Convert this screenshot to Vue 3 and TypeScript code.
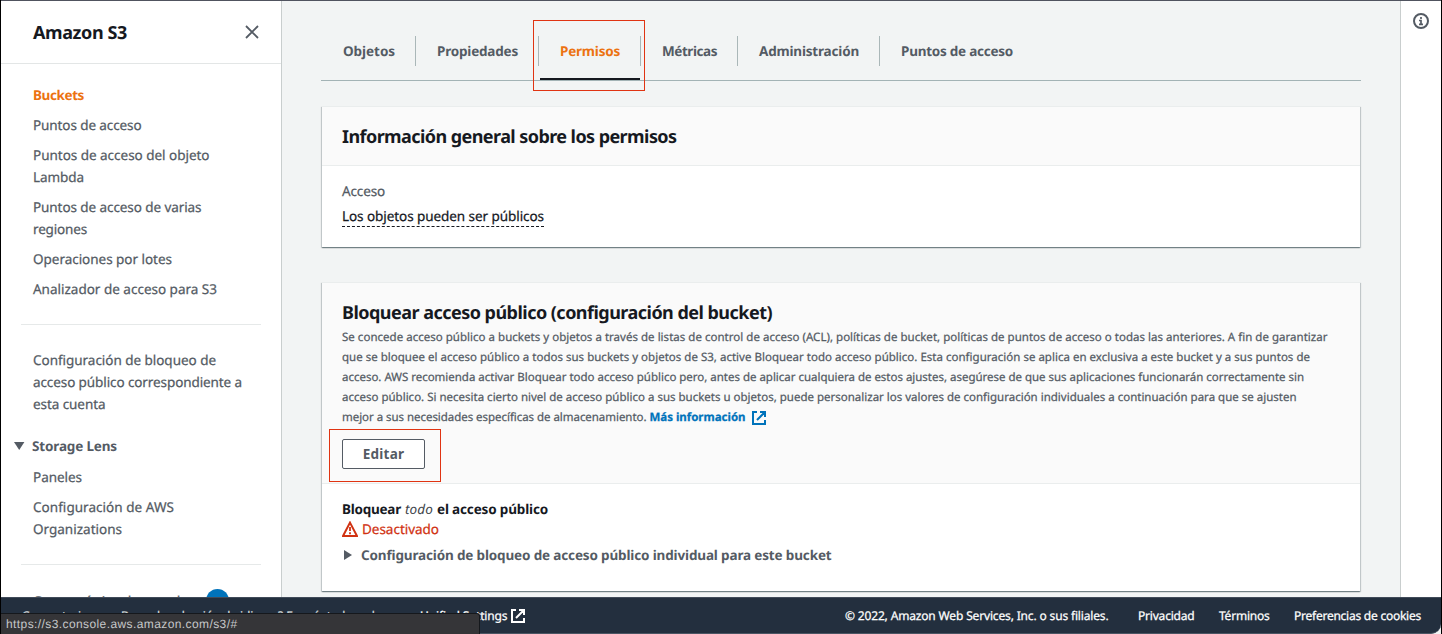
<script setup lang="ts">
import type { Directive } from 'vue'

interface Line { text: string; width: number }
interface NavItem { lines: Line[]; active?: boolean }

/* Tracks a single-line label out (or in) so it fills the given width in px. */
const vTrack: Directive<HTMLElement, number> = {
  mounted(el, binding) {
    const count = (el.textContent ?? '').length
    const natural = el.getBoundingClientRect().width
    el.style.letterSpacing = `${(binding.value - natural) / count}px`
  },
}

const mainNav: NavItem[] = [
  { lines: [{ text: 'Buckets', width: 51 }], active: true },
  { lines: [{ text: 'Puntos de acceso', width: 108.5 }] },
  { lines: [{ text: 'Puntos de acceso del objeto', width: 176.5 }, { text: 'Lambda', width: 51 }] },
  { lines: [{ text: 'Puntos de acceso de varias', width: 168.5 }, { text: 'regiones', width: 54 }] },
  { lines: [{ text: 'Operaciones por lotes', width: 139 }] },
  { lines: [{ text: 'Analizador de acceso para S3', width: 184 }] },
]

const accountNav: NavItem[] = [
  {
    lines: [
      { text: 'Configuración de bloqueo de', width: 183 },
      { text: 'acceso público correspondiente a', width: 209 },
      { text: 'esta cuenta', width: 72.5 },
    ],
  },
]

const lensNav: NavItem[] = [
  { lines: [{ text: 'Paneles', width: 49 }] },
  { lines: [{ text: 'Configuración de AWS', width: 141 }, { text: 'Organizations', width: 89 }] },
]

const tabs = [
  { text: 'Objetos', width: 52 },
  { text: 'Propiedades', width: 81 },
  { text: 'Permisos', width: 60, active: true },
  { text: 'Métricas', width: 55 },
  { text: 'Administración', width: 100 },
  { text: 'Puntos de acceso', width: 112 },
]

const description: Line[] = [
  { text: 'Se concede acceso público a buckets y objetos a través de listas de control de acceso (ACL), políticas de bucket, políticas de puntos de acceso o todas las anteriores. A fin de garantizar', width: 985.5 },
  { text: 'que se bloquee el acceso público a todos sus buckets y objetos de S3, active Bloquear todo acceso público. Esta configuración se aplica en exclusiva a este bucket y a sus puntos de', width: 968 },
  { text: 'acceso. AWS recomienda activar Bloquear todo acceso público pero, antes de aplicar cualquiera de estos ajustes, asegúrese de que sus aplicaciones funcionarán correctamente sin', width: 962 },
  { text: 'acceso público. Si necesita cierto nivel de acceso público a sus buckets u objetos, puede personalizar los valores de configuración individuales a continuación para que se ajusten', width: 954.5 },
]
</script>

<template>
  <div class="window">
    <div class="workspace">
      <aside class="sidebar">
        <header class="side-head">
          <h2><span v-track="94" class="t">Amazon S3</span></h2>
          <svg class="close" width="14" height="14" viewBox="0 0 14 14"><path d="M1 1 13 13M13 1 1 13" /></svg>
        </header>
        <nav class="side-body">
          <ul>
            <li v-for="(item, i) in mainNav" :key="i" :class="{ active: item.active }">
              <div v-for="line in item.lines" :key="line.text"><span v-track="line.width" class="t">{{ line.text }}</span></div>
            </li>
          </ul>
          <hr />
          <ul class="account">
            <li v-for="(item, i) in accountNav" :key="i">
              <div v-for="line in item.lines" :key="line.text"><span v-track="line.width" class="t">{{ line.text }}</span></div>
            </li>
          </ul>
          <div class="lens">
            <svg width="11" height="8" viewBox="0 0 11 8"><path d="M0 0h10.4L5.2 8z" /></svg>
            <b v-track="85" class="t">Storage Lens</b>
          </div>
          <ul>
            <li v-for="(item, i) in lensNav" :key="i">
              <div v-for="line in item.lines" :key="line.text"><span v-track="line.width" class="t">{{ line.text }}</span></div>
            </li>
          </ul>
          <hr />
          <div class="feature">
            <span v-track="155" class="t">Característica destacada</span>
            <span class="count"></span>
          </div>
        </nav>
      </aside>

      <main class="content">
        <div class="tabs">
          <div v-for="tab in tabs" :key="tab.text" class="tab" :class="{ current: tab.active }">
            <span v-track="tab.width" class="t">{{ tab.text }}</span>
          </div>
        </div>

        <section class="card overview">
          <div class="card-head"><h3><span v-track="334.5" class="t">Información general sobre los permisos</span></h3></div>
          <div class="card-body">
            <div class="label"><span v-track="43" class="t">Acceso</span></div>
            <div class="value"><span v-track="202" class="t">Los objetos pueden ser públicos</span></div>
          </div>
        </section>

        <section class="card block">
          <div class="card-head">
            <h3><span v-track="430" class="t">Bloquear acceso público (configuración del bucket)</span></h3>
            <div class="description">
              <div v-for="line in description" :key="line.text"><span v-track="line.width" class="t">{{ line.text }}</span></div>
              <div class="last">
                <span v-track="304.5" class="t">mejor a sus necesidades específicas de almacenamiento.</span>
                <a><span v-track="96" class="t">Más información</span>
                  <svg width="14" height="14" viewBox="0 0 14 14"><path d="M5 1H1v12h12V9M8 1h5v5M13 1 5 9" /></svg>
                </a>
              </div>
            </div>
            <button type="button"><span v-track="41.5" class="t">Editar</span></button>
          </div>
          <div class="card-body">
            <div class="setting">
              <b v-track="59" class="t">Bloquear</b><em v-track="28" class="t">todo</em><b v-track="111" class="t">el acceso público</b>
            </div>
            <div class="status">
              <svg width="16" height="16" viewBox="0 0 16 16"><path d="M8 1.6 15 15H1z" /><path class="mark" d="M8 6v4M8 11.3v2" /></svg>
              <span v-track="77" class="t">Desactivado</span>
            </div>
            <div class="expander">
              <svg width="8" height="10" viewBox="0 0 8 10"><path d="M0 0v10l8-5z" /></svg>
              <b v-track="470.5" class="t">Configuración de bloqueo de acceso público individual para este bucket</b>
            </div>
          </div>
        </section>
      </main>

      <aside class="tools">
        <svg width="16" height="16" viewBox="0 0 16 16">
          <circle cx="8" cy="8" r="7" />
          <path d="M8 4v2M6 7.5h2v3.8M6 11.3h4" />
        </svg>
      </aside>
    </div>

    <footer class="footer">
      <span v-track="72" class="t comments">Comentarios</span>
      <span v-track="302" class="t language">¿Busca la selección de idioma? Encuéntrela en la nueva</span>
      <span v-track="87.5" class="t">Unified Settings</span>
      <svg width="14" height="14" viewBox="0 0 14 14"><path d="M5 1H1v12h12V9M8 1h5v5M13 1 5 9" /></svg>
      <div class="legal">
        <span v-track="263.5" class="t">© 2022, Amazon Web Services, Inc. o sus filiales.</span>
        <span v-track="56.5" class="t">Privacidad</span>
        <span v-track="50.5" class="t">Términos</span>
        <span v-track="127" class="t">Preferencias de cookies</span>
      </div>
    </footer>

    <div class="outline tab-outline"></div>
    <div class="outline edit-outline"></div>
    <div class="link-status"><span v-track="231.5" class="t">https://s3.console.aws.amazon.com/s3/#</span></div>
  </div>
</template>

<style>
body {
  margin: 0;
  background: #000;
}
</style>

<style scoped>
* {
  box-sizing: border-box;
}

.window {
  position: relative;
  width: 1442px;
  height: 634px;
  overflow: hidden;
  display: flex;
  flex-direction: column;
  border: 0 solid #000;
  border-width: 0 1px;
  background: #f2f4f4;
  font-family: "Noto Sans", "Open Sans", sans-serif;
  font-size: 13.5px;
  line-height: 22px;
  color: #545b64;
  text-rendering: geometricPrecision;
}

.t {
  display: inline-block;
  white-space: nowrap;
}

svg {
  display: block;
  flex: none;
}

.workspace {
  display: flex;
  height: 597px;
  flex: none;
  overflow: hidden;
  border-top: 1px solid #50535f;
}

.sidebar {
  width: 281px;
  flex: none;
  background: #fff;
  border-right: 1px solid #c9cece;
}

.sidebar li:not(.active),
.feature,
.label,
.value,
.status,
.description,
.footer {
  -webkit-text-stroke: 0.25px currentColor;
}

.side-head {
  height: 63px;
  display: flex;
  align-items: center;
  justify-content: space-between;
  padding: 0 22px 0 32px;
  border-bottom: 1px solid #e3e6e6;
}

h2,
h3 {
  margin: 0;
  font-size: 18px;
  line-height: 22px;
  font-weight: 700;
  color: #16191f;
}

h2 {
  padding-top: 1px;
}

.close path {
  fill: none;
  stroke: #545b64;
  stroke-width: 1.8;
}

.side-body {
  padding: 20px 20px 0;
}

ul {
  list-style: none;
  margin: 0;
  padding: 0 0 0 12px;
}

li {
  margin-bottom: 8px;
}

li > div {
  height: 22px;
}

li.active {
  color: #ec7211;
  font-weight: 700;
}

hr {
  height: 1px;
  margin: 24px 0;
  border: 0;
  background: #e6e9e9;
}

.lens {
  display: flex;
  align-items: center;
  gap: 7px;
  height: 22px;
  margin: 20px 0 9px -7px;
}

.lens path,
.expander path {
  fill: #545b64;
}

.feature {
  display: flex;
  align-items: center;
  gap: 18px;
  padding-left: 12px;
}

.count {
  width: 23px;
  height: 23px;
  border-radius: 50%;
  background: #0073bb;
}

.content {
  width: 1118px;
  flex: none;
  padding: 35px 39px 0;
}

.tabs {
  display: flex;
  height: 45px;
  padding-left: 1px;
  border-bottom: 1px solid #a3b3b5;
}

.tab {
  position: relative;
  height: 30px;
  line-height: 30px;
  padding: 0 20px 0 21px;
  border-right: 1px solid #aab7b8;
  font-weight: 700;
}

.tab:last-child {
  border-right: 0;
}

.tab.current {
  color: #ec7211;
}

.tab.current::after {
  content: "";
  position: absolute;
  left: 1px;
  right: 0;
  top: 42px;
  height: 2px;
  background: #16191f;
}

.card {
  width: 1038px;
  margin-left: 1px;
  background: #fff;
  border-top: 1px solid #eaeded;
  box-shadow: 0 1px 1px 0 rgba(0, 28, 36, 0.35), 1px 1px 1px 0 rgba(0, 28, 36, 0.15), -1px 1px 1px 0 rgba(0, 28, 36, 0.15);
}

.card-head {
  background: #fafafa;
  border-bottom: 1px solid #eaeded;
  padding: 0 20px;
}

.overview {
  height: 141px;
  margin-top: 25px;
}

.overview .card-head {
  height: 59px;
  padding-top: 19px;
}

.overview .card-body {
  padding: 14px 20px;
}

.value {
  margin-top: 3px;
  color: #16191f;
}

.value .t {
  height: 22px;
  border-bottom: 1px dashed #16191f;
}

.block {
  height: 309px;
  margin-top: 35px;
}

.block .card-head {
  height: 201px;
  padding-top: 19px;
}

.description {
  margin-top: 4px;
  font-size: 11.5px;
  line-height: 20px;
}

.description > div {
  height: 20px;
}

.last,
.last a {
  display: flex;
  align-items: center;
}

.last a {
  margin-left: 3px;
  gap: 6px;
  font-weight: 700;
  color: #0073bb;
}

.last svg path {
  fill: none;
  stroke: #0073bb;
  stroke-width: 2;
}

button {
  display: block;
  width: 83px;
  height: 30px;
  margin-top: 11px;
  padding: 0;
  border: 1px solid #545b64;
  border-radius: 2px;
  background: #fff;
  font: inherit;
  font-weight: 700;
  color: #545b64;
}

.block .card-body {
  padding: 15px 20px 0;
}

.setting {
  display: flex;
  gap: 4px;
  height: 20px;
  line-height: 20px;
  color: #16191f;
}

.setting em {
  color: #42464c;
}

.status {
  display: flex;
  align-items: center;
  gap: 4px;
  height: 20px;
  line-height: 20px;
  color: #d13212;
}

.status path {
  fill: none;
  stroke: #d13212;
  stroke-width: 2;
}

.status .mark {
  stroke-width: 1.8;
}

.expander {
  display: flex;
  align-items: center;
  gap: 9px;
  height: 22px;
  margin-top: 5px;
  padding-left: 2px;
}

.tools {
  flex: 1;
  background: #fff;
  border-left: 1px solid #c9cece;
  padding: 12px 0 0 12px;
}

.tools circle,
.tools path {
  fill: none;
  stroke: #545b64;
  stroke-width: 2;
}

.tools path {
  stroke-width: 1.7;
}

.footer {
  height: 37px;
  flex: none;
  display: flex;
  align-items: center;
  padding: 1px 20px 0 21px;
  border-top: 1px solid #414b59;
  border-bottom: 1px solid #4b5563;
  border-radius: 0 0 10px 0;
  background: #232f3e;
  font-size: 12px;
  color: #fff;
}

.comments {
  margin-right: 22px;
}

.comments,
.language {
  color: #d5dbdb;
}

.language {
  margin-right: 2px;
}

.footer svg {
  margin-left: 3px;
}

.footer path {
  fill: none;
  stroke: #fff;
  stroke-width: 2;
}

.legal {
  display: flex;
  margin-left: auto;
}

.legal .t + .t {
  margin-left: 29.5px;
}

.legal .t:nth-child(n + 3) {
  margin-left: 24.5px;
}

.outline {
  position: absolute;
  border: 1px solid #e03412;
}

.tab-outline {
  left: 532px;
  top: 20px;
  width: 112px;
  height: 71px;
}

.edit-outline {
  left: 328px;
  top: 429px;
  width: 112px;
  height: 53px;
}

.link-status {
  position: absolute;
  left: 0;
  bottom: 0;
  width: 479px;
  height: 21px;
  padding-left: 5px;
  border-top: 1px solid #15181c;
  border-right: 1px solid #15181c;
  border-top-right-radius: 3px;
  background: #353538;
  font-family: "Liberation Sans", Roboto, sans-serif;
  font-size: 12px;
  line-height: 20px;
  color: #c6c7c9;
}
</style>
